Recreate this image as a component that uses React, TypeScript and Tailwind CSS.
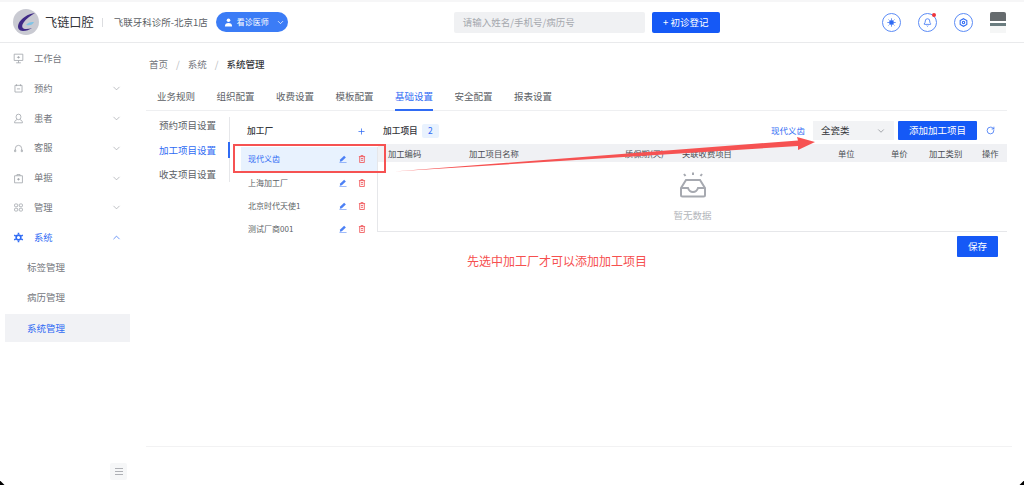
import { Bell, ChevronDown, ChevronUp, Plus, RotateCw } from 'lucide-react'

const FONT = "font-['Noto_Sans_CJK_SC','Noto_Sans',sans-serif]"

function MenuIcon({ name }: { name: string }) {
  const cls = 'w-[11px] h-[11px]'
  if (name === 'monitor') {
    return (
      <svg viewBox="0 0 14 14" className={cls} fill="none" stroke="currentColor" strokeWidth="1">
        <path d="M1.500 1.500h11v8h-11zM7 4v3M5 5.500h4M4 12.500h6M7 9.500v3" />
      </svg>
    )
  }
  if (name === 'calendar') {
    return (
      <svg viewBox="0 0 14 14" className={cls} fill="none" stroke="currentColor" strokeWidth="1">
        <path d="M2.500 3h9v8.500h-9zM4.500 1.500v2.500M9.500 1.500v2.500M5 7.500h4" />
      </svg>
    )
  }
  if (name === 'user') {
    return (
      <svg viewBox="0 0 14 14" className={cls} fill="none" stroke="currentColor" strokeWidth="1">
        <path d="M7 1.500a3 3 0 0 1 3 3v1a3 3 0 0 1-6 0v-1a3 3 0 0 1 3-3zM5 8.500c-2 .5-3 2-3 4h10c0-2-1-3.500-3-4" />
      </svg>
    )
  }
  if (name === 'headset') {
    return (
      <svg viewBox="0 0 14 14" className={cls} fill="none" stroke="currentColor" strokeWidth="1">
        <path d="M3 9V7a4 4 0 0 1 8 0v2M2 9h1.500v2H2zM10.500 9H12v2h-1.500z" />
      </svg>
    )
  }
  if (name === 'bill') {
    return (
      <svg viewBox="0 0 14 14" className={cls} fill="none" stroke="currentColor" strokeWidth="1">
        <path d="M2 3.500h10v9H2zM5 3.500V2h4v1.500" />
        <circle cx="7" cy="8" r="1" fill="currentColor" />
      </svg>
    )
  }
  if (name === 'grid') {
    return (
      <svg viewBox="0 0 14 14" className={cls} fill="none" stroke="currentColor" strokeWidth="1">
        <rect x="2" y="2.500" width="4" height="3.500" rx="1" />
        <rect x="8" y="2.500" width="4" height="3.500" rx="1" />
        <rect x="2" y="8" width="4" height="3.500" rx="1" />
        <rect x="8" y="8" width="4" height="3.500" rx="1" />
      </svg>
    )
  }
  return (
    <svg viewBox="0 0 14 14" className={cls} fill="none" stroke="currentColor" strokeWidth="2">
      <circle cx="7" cy="7" r="3" />
      <path d="M7 1v2M7 11v2M1.500 4l2 1M10.500 9l2 1M1.500 10l2-1M10.500 5l2-1" />
    </svg>
  )
}

const menus = [
  { label: '工作台', icon: 'monitor' },
  { label: '预约', icon: 'calendar', arrow: true },
  { label: '患者', icon: 'user', arrow: true },
  { label: '客服', icon: 'headset', arrow: true },
  { label: '单据', icon: 'bill', arrow: true },
  { label: '管理', icon: 'grid', arrow: true },
]

const tabs = ['业务规则', '组织配置', '收费设置', '模板配置', '基础设置', '安全配置', '报表设置']
const factories = ['现代义齿', '上海加工厂', '北京时代天使1', '测试厂商001']

function Logo() {
  return (
    <svg viewBox="0 0 26 26" className="w-[26px] h-[26px] shrink-0">
      <circle cx="13" cy="13" r="13" fill="#c9cad2" />
      <path d="M22 4C15 5 8 9 5.500 15c-1.500 4 .5 7 4.500 7 3.500 0 6-1 9-3-3 1-6.500 1.500-8.500.5-2-1.200-1.500-4 .5-6.500C13 10 17 7 22 4z" fill="#3f2a86" />
      <path d="M13 16c2-2.500 5-3.500 8-3-1 2.500-4 4-8 3z" fill="#7fc3e6" />
    </svg>
  )
}

function EditIcon() {
  return (
    <svg viewBox="0 0 9 9" className="w-[8px] h-[8px] mr-[11px] text-[#4c80f5]" fill="currentColor">
      <path d="M5.800.8l1.900 1.900-4.500 4.400-2.300.4.4-2.300z" />
      <path d="M.5 8.300h8v.6h-8z" />
    </svg>
  )
}

function TrashIcon() {
  return (
    <svg viewBox="0 0 9 9" className="w-[8px] h-[8px] text-[#f0595c]" fill="none" stroke="currentColor" strokeWidth="1">
      <path d="M1 1.800h7M3.300 1.800V.7h2.400v1.100M1.900 1.800v6.700h5.200V1.800M3.300 4h2.400M3.300 6h2.400" />
    </svg>
  )
}

function RoundIcon({ children, dot }: { children: React.ReactNode; dot?: boolean }) {
  return (
    <div className="relative w-[19px] h-[19px] rounded-full border border-[#5c8cf6] flex items-center justify-center text-[#2f6bf4]">
      {children}
      {dot && <span className="absolute -top-[1px] right-[0px] w-[4px] h-[4px] rounded-full bg-[#f0353b]" />}
    </div>
  )
}

export default function App() {
  return (
    <div className={`${FONT} relative w-[1024px] h-[485px] overflow-hidden bg-white flex flex-col text-[9.5px] text-[#5c5f66]`}>
      <div className="h-[2px] bg-[#f6f6f7]" />

      {/* Header */}
      <header className="h-[41px] shrink-0 border-b border-[#e9eaec] flex items-center pl-[13px]">
        <Logo />
        <span className="ml-[6px] text-[12.2px] text-[#33353a]">飞链口腔</span>
        <span className="ml-[8px] w-px h-[9px] bg-[#dcdde0]" />
        <span className="ml-[11px] w-[96px] whitespace-nowrap text-[9.5px]">飞联牙科诊所-北京1店</span>
        <div className="ml-[6px] w-[72px] h-[20px] rounded-full bg-[#3b7cf6] text-white flex items-center pl-[8px] gap-[4px]">
          <svg viewBox="0 0 10 10" className="w-[9px] h-[9px]" fill="#fff">
            <circle cx="5" cy="2.500" r="2" />
            <path d="M1 9.500c0-3 1.500-4 4-4s4 1 4 4z" />
          </svg>
          <span className="text-[8px] whitespace-nowrap">看诊医师</span>
          <ChevronDown className="w-[9px] h-[9px] ml-[3px]" strokeWidth={2} />
        </div>
        <div className="ml-[166px] w-[191px] h-[21px] rounded-[2px] bg-[#f0f1f3] flex items-center pl-[9px] text-[#a5a8ae] text-[9.5px]">
          请输入姓名/手机号/病历号
        </div>
        <div className="ml-[7px] w-[68px] h-[21px] rounded-[2px] bg-[#1559f6] text-white flex items-center justify-center text-[9.5px]">
          + 初诊登记
        </div>
        <div className="ml-[162px] flex items-center gap-[17px]">
          <RoundIcon>
            <svg viewBox="0 0 10 10" className="w-[9px] h-[9px]" fill="none" stroke="currentColor" strokeWidth="1">
              <circle cx="5" cy="5" r="2.200" fill="currentColor" />
              <path d="M5 .5v1.500M5 8v1.500M.5 5H2M8 5h1.500M1.800 1.800l1 1M7.200 7.200l1 1M1.800 8.200l1-1M7.200 2.800l1-1" />
            </svg>
          </RoundIcon>
          <RoundIcon dot>
            <Bell className="w-[9px] h-[9px]" strokeWidth={2} />
          </RoundIcon>
          <RoundIcon>
            <svg viewBox="0 0 10 10" className="w-[9px] h-[9px]" fill="none" stroke="currentColor" strokeWidth="1.200">
              <path d="M5 .8l3.700 2.100v4.200L5 9.200 1.300 7.100V2.900z" />
              <circle cx="5" cy="5" r="1.300" />
            </svg>
          </RoundIcon>
        </div>
        <div className="ml-[17px] w-[16px] h-[21px] flex flex-col">
          <div className="h-[9px] rounded-t-[2px] bg-[#666b6e]" />
          <div className="h-[2px] bg-white" />
          <div className="h-[3px] bg-[#6a7c7f]" />
          <div className="h-[7px] bg-[#f5f6f6]" />
        </div>
      </header>

      <div className="flex flex-1 min-h-0">
        {/* Sidebar */}
        <aside className="w-[130px] shrink-0 pt-[1px] relative">
          {menus.map(m => (
            <div key={m.label} className="h-[29.8px] flex items-center pl-[13px] pr-[7px] text-[#74777d]">
              <span className="w-[21px] flex text-[#a0a3a9]">
                <MenuIcon name={m.icon} />
              </span>
              <span className="flex-1 text-[9.3px]">{m.label}</span>
              {m.arrow && <ChevronDown className="w-[11px] h-[11px] text-[#a2a5ab] mr-[1px]" strokeWidth={1.500} />}
            </div>
          ))}
          <div className="h-[29.8px] flex items-center pl-[13px] pr-[7px] text-[#2f6bf4]">
            <span className="w-[21px] flex">
              <MenuIcon name="gear" />
            </span>
            <span className="flex-1 text-[9.3px]">系统</span>
            <ChevronUp className="w-[11px] h-[11px] mr-[1px]" strokeWidth={1.500} />
          </div>
          <div className="h-[29.8px] flex items-center pl-[27px] text-[#74777d]">标签管理</div>
          <div className="h-[29.8px] flex items-center pl-[27px] text-[#74777d]">病历管理</div>
          <div className="mt-[1.500px] ml-[5px] h-[28px] bg-[#f1f2f5] flex items-center pl-[22px] text-[#2f6bf4]">系统管理</div>
          <div className="absolute left-[110px] top-[420px] w-[17px] h-[17px] rounded-[2px] bg-[#f6f7f8] flex flex-col items-center justify-center gap-[2px]">
            <span className="w-[8px] h-px bg-[#aeb0b5]" />
            <span className="w-[8px] h-px bg-[#aeb0b5]" />
            <span className="w-[8px] h-px bg-[#aeb0b5]" />
          </div>
        </aside>

        {/* Main */}
        <main className="flex-1 min-w-0 flex flex-col pl-[16px]">
          <div className="mt-[13px] h-[16px] flex items-center pl-[3px] text-[9.5px] text-[#74777d]">
            <span>首页</span>
            <span className="mx-[8px] text-[#b8bac0]">/</span>
            <span>系统</span>
            <span className="mx-[8px] text-[#b8bac0]">/</span>
            <span className="text-[#33353a] font-medium">系统管理</span>
          </div>

          <div className="mt-[13px] w-[861px] h-[26px] border-b border-[#eeeff1] flex pl-[11px] gap-[21.500px] shrink-0">
            {tabs.map(t => (
              <div
                key={t}
                className={
                  t === '基础设置'
                    ? 'h-[26px] pt-[4px] border-b-2 border-[#2f6bf4] text-[#2f6bf4] text-[9.5px]'
                    : 'h-[26px] pt-[4px] text-[#5c5f66] text-[9.5px]'
                }
              >
                {t}
              </div>
            ))}
          </div>

          <div className="flex w-[861px] mt-[6px]">
            {/* Sub nav */}
            <div className="w-[84px] h-[65px] shrink-0 border-r border-[#e6e7ea] pl-[13px] flex flex-col gap-[8.500px]">
              <div className="h-[16px] leading-[16px]">预约项目设置</div>
              <div className="h-[16px] leading-[16px] text-[#2f6bf4] -mr-px border-r-2 border-[#2f6bf4]">加工项目设置</div>
              <div className="h-[16px] leading-[16px]">收支项目设置</div>
            </div>

            {/* Factory list */}
            <div className="ml-[4px] w-[144px] shrink-0">
              <div className="h-[30px] pt-[6px] pl-[13px] pr-[12px] flex items-start justify-between">
                <span className="text-[#33353a] text-[8.700px] font-medium leading-[16px]">加工厂</span>
                <Plus className="w-[9px] h-[9px] mt-[4px] text-[#2f6bf4]" strokeWidth={2} />
              </div>
              <div className="ml-[7px] h-[85px] border-r border-[#e6e7ea]">
                {factories.map((f, i) => (
                  <div
                    key={f}
                    className={
                      i === 0
                        ? 'h-[24px] bg-[#e8f2fe] text-[#2f6bf4] flex items-center pl-[7px] pr-[11px] text-[8px]'
                        : 'h-[23px] flex items-center pl-[7px] pr-[11px] text-[8px]'
                    }
                  >
                    <span className="flex-1 whitespace-nowrap">{f}</span>
                    <EditIcon />
                    <TrashIcon />
                  </div>
                ))}
              </div>
            </div>

            {/* Items */}
            <div className="flex-1 min-w-0">
              <div className="mt-[4px] h-[19px] flex items-center pl-[5px] pr-[12px]">
                <span className="text-[#33353a] text-[8.700px] font-medium">加工项目</span>
                <span className="ml-[4px] w-[17px] h-[14px] rounded-[2px] bg-[#e9f2fe] text-[#2f6bf4] text-[8.500px] flex items-center justify-center">2</span>
                <span className="ml-auto text-[#2f6bf4] text-[8.500px]">现代义齿</span>
                <div className="ml-[8px] w-[81px] h-[19px] bg-[#f2f3f5] flex items-center pl-[8px] pr-[8px] justify-between text-[#33353a]">
                  <span>全瓷类</span>
                  <ChevronDown className="w-[10px] h-[10px] text-[#74777d]" strokeWidth={1.500} />
                </div>
                <div className="ml-[4px] w-[79px] h-[19px] rounded-[1px] bg-[#1559f6] text-white flex items-center justify-center">添加加工项目</div>
                <RotateCw className="ml-[9px] w-[9px] h-[9px] text-[#2f6bf4]" strokeWidth={2} />
              </div>
              <div className="mt-[4px] h-[18px] bg-[#f0f1f4] grid grid-cols-[10px_81px_156px_57px_156px_53px_38px_53px_1fr] items-center text-[#4a4d53] text-[8.300px] whitespace-nowrap">
                <span />
                <span>加工编码</span>
                <span>加工项目名称</span>
                <span>质保期(天)</span>
                <span>关联收费项目</span>
                <span>单位</span>
                <span>单价</span>
                <span>加工类别</span>
                <span>操作</span>
              </div>
              <div className="h-[70px] border-b border-[#e6e7ea] flex flex-col items-center pt-[9px]">
                <svg viewBox="0 0 30 28" className="w-[30px] h-[28px]" fill="none" stroke="#a6a9b0">
                  <path d="M6 3l1.500 2M15 1.500v2.500M24 3l-1.500 2" strokeWidth="2" />
                  <path d="M3 17l5-8h14l5 8v7a1.500 1.500 0 0 1-1.500 1.500h-21A1.500 1.500 0 0 1 3 24z" strokeWidth="2" />
                  <path d="M3 17h7c1 3 2 4 5 4s4-1 5-4h7" strokeWidth="2" />
                </svg>
                <span className="mt-[9px] text-[#b3b6bb] text-[9.5px] leading-[14px]">暂无数据</span>
              </div>
              <div className="mt-[4px] flex justify-end pr-[9px]">
                <div className="w-[41px] h-[21px] rounded-[1px] bg-[#1559f6] text-white flex items-center justify-center">保存</div>
              </div>
            </div>
          </div>

          <div className="mt-auto mb-[38px] w-[866px] border-t border-[#f2f2f3]" />
        </main>
      </div>

      {/* Annotation drawn on top of the screenshot */}
      <div className="absolute left-[233px] top-[144px] w-[153px] h-[29px] border-2 border-[#f65252]" />
      <svg viewBox="0 0 1024 485" className="absolute inset-0 w-[1024px] h-[485px] pointer-events-none">
        <polygon points="394,171.500 798,140.500 797,137 815,142 798,150 798,146" fill="#f65252" />
      </svg>
      <div className="absolute left-[467px] top-[252px] text-[12px] leading-[18px] text-[#f6504f] whitespace-nowrap">先选中加工厂才可以添加加工项目</div>

      {/* Window corners */}
      <div className="absolute -left-[8px] -bottom-[8px] w-[12px] h-[12px] rotate-45 bg-black" />
      <div className="absolute -right-[8px] -bottom-[8px] w-[12px] h-[12px] rotate-45 bg-black" />
    </div>
  )
}
